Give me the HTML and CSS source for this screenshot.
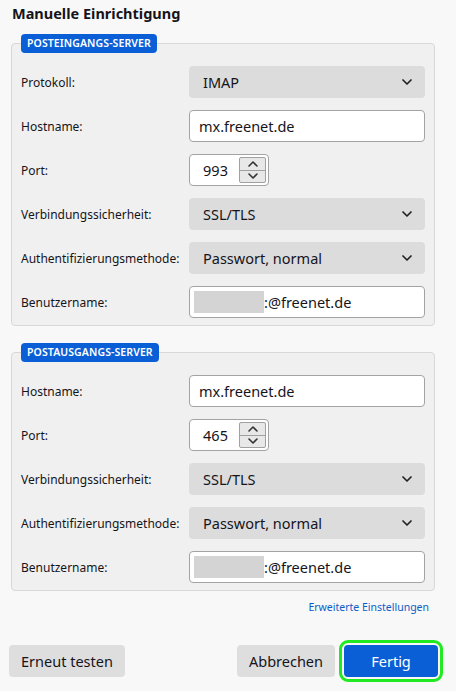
FILE: index.html
```html
<!DOCTYPE html>
<html lang="de">
<head>
<meta charset="utf-8">
<title>Manuelle Einrichtigung</title>
<link rel="stylesheet" href="styles.css">
</head>
<body>
<main class="page">
  <h1 class="title">Manuelle Einrichtigung</h1>

  <section class="group group-in">
    <span class="badge">POSTEINGANGS-SERVER</span>
    <div class="grid">
      <label class="label">Protokoll:</label>
      <div class="select"><span>IMAP</span><svg class="chev" viewBox="0 0 10 6"><path d="M1 1l4 4 4-4"/></svg></div>

      <label class="label">Hostname:</label>
      <div class="input">mx.freenet.de</div>

      <label class="label">Port:</label>
      <div class="number"><span class="num">993</span><span class="spin"><span class="spin-btn"><svg viewBox="0 0 10 6"><path d="M1 5l4-4 4 4"/></svg></span><span class="spin-btn"><svg viewBox="0 0 10 6"><path d="M1 1l4 4 4-4"/></svg></span></span></div>

      <label class="label">Verbindungssicherheit:</label>
      <div class="select"><span>SSL/TLS</span><svg class="chev" viewBox="0 0 10 6"><path d="M1 1l4 4 4-4"/></svg></div>

      <label class="label">Authentifizierungsmethode:</label>
      <div class="select"><span>Passwort, normal</span><svg class="chev" viewBox="0 0 10 6"><path d="M1 1l4 4 4-4"/></svg></div>

      <label class="label">Benutzername:</label>
      <div class="input user"><span class="redact"></span><span>:@freenet.de</span></div>
    </div>
  </section>

  <section class="group group-out">
    <span class="badge">POSTAUSGANGS-SERVER</span>
    <div class="grid">
      <label class="label">Hostname:</label>
      <div class="input">mx.freenet.de</div>

      <label class="label">Port:</label>
      <div class="number"><span class="num">465</span><span class="spin"><span class="spin-btn"><svg viewBox="0 0 10 6"><path d="M1 5l4-4 4 4"/></svg></span><span class="spin-btn"><svg viewBox="0 0 10 6"><path d="M1 1l4 4 4-4"/></svg></span></span></div>

      <label class="label">Verbindungssicherheit:</label>
      <div class="select"><span>SSL/TLS</span><svg class="chev" viewBox="0 0 10 6"><path d="M1 1l4 4 4-4"/></svg></div>

      <label class="label">Authentifizierungsmethode:</label>
      <div class="select"><span>Passwort, normal</span><svg class="chev" viewBox="0 0 10 6"><path d="M1 1l4 4 4-4"/></svg></div>

      <label class="label">Benutzername:</label>
      <div class="input user"><span class="redact"></span><span>:@freenet.de</span></div>
    </div>
  </section>

  <div class="advanced"><a class="link" href="#">Erweiterte Einstellungen</a></div>

  <footer class="actions">
    <button class="btn">Erneut testen</button>
    <div class="actions-right">
      <button class="btn">Abbrechen</button>
      <button class="btn btn-primary">Fertig</button>
    </div>
  </footer>
</main>
</body>
</html>
```

FILE: styles.css
```css
* { box-sizing: border-box; }

html, body {
  margin: 0;
  padding: 0;
  background: #f8f8f8;
}

body {
  font-family: "Noto Sans", "Open Sans", sans-serif;
  color: #15141a;
  width: 456px;
  height: 691px;
  overflow: hidden;
}

.page {
  padding: 3px 0 0 0;
}

.title {
  margin: 0 0 0 12px;
  font-size: 14.5px;
  font-weight: 700;
  line-height: 20px;
  height: 40px;
}

.group {
  position: relative;
  margin: 0 21px 0 11px;
  border: 1px solid #d8d8d8;
  border-radius: 4px;
  background: #f0f0f0;
  padding: 22px 9px 7px 9px;
}

.group-out {
  margin-top: 26px;
}

.badge {
  position: absolute;
  top: -10px;
  left: 9px;
  height: 19px;
  padding: 0 6px;
  border-radius: 4px;
  background: #0a5fd6;
  color: #fff;
  font-size: 10.5px;
  font-weight: 600;
  line-height: 19px;
  letter-spacing: 0.1px;
}

.grid {
  display: grid;
  grid-template-columns: 168px 236px;
  grid-auto-rows: 32px;
  row-gap: 12px;
  align-items: center;
}

.label {
  font-size: 12px;
}

.select {
  height: 32px;
  border-radius: 4px;
  background: #dcdcdc;
  display: flex;
  align-items: center;
  justify-content: space-between;
  padding: 0 13px 0 14px;
  font-size: 14.5px;
}

.chev {
  width: 10px;
  height: 6px;
  fill: none;
  stroke: #222;
  stroke-width: 1.7;
  stroke-linecap: round;
  stroke-linejoin: round;
}

.input {
  height: 32px;
  border: 1px solid #a3a3a3;
  border-radius: 4px;
  background: #fff;
  display: flex;
  align-items: center;
  padding: 0 9px;
  font-size: 14.5px;
}

.input.user {
  padding-left: 4px;
}

.redact {
  width: 70px;
  height: 22px;
  background: #d4d4d4;
}

.number {
  width: 80px;
  height: 32px;
  border: 1px solid #a3a3a3;
  border-radius: 4px;
  background: #fff;
  display: flex;
  align-items: center;
  padding: 0 1px 0 0;
  font-size: 14.5px;
}

.num {
  flex: 1;
  text-align: center;
  padding-left: 2px;
}

.spin {
  width: 27px;
  height: 26px;
  display: flex;
  flex-direction: column;
  border: 1px solid #a0a0a0;
  border-radius: 2px;
  background: #e8e8e8;
  margin-right: 1px;
}

.spin-btn {
  flex: 1;
  display: flex;
  align-items: center;
  justify-content: center;
}

.spin-btn + .spin-btn {
  border-top: 1px solid #a0a0a0;
}

.spin-btn svg {
  width: 10px;
  height: 6px;
  fill: none;
  stroke: #333;
  stroke-width: 1.6;
  stroke-linecap: round;
  stroke-linejoin: round;
}

.advanced {
  display: flex;
  justify-content: flex-end;
  padding: 9px 27px 0 0;
  height: 37px;
}

.link {
  color: #0b5cc9;
  font-size: 10.5px;
  text-decoration: none;
}

.actions {
  display: flex;
  justify-content: space-between;
  padding: 17px 18px 0 9px;
}

.actions-right {
  display: flex;
  gap: 9px;
}

.btn {
  height: 32px;
  border: none;
  border-radius: 4px;
  background: #dedede;
  color: #15141a;
  font-family: "Noto Sans", "Open Sans", sans-serif;
  font-size: 14.5px;
  padding: 0 12px;
}

.btn-primary {
  background: #0a5fd6;
  color: #fff;
  width: 94px;
  outline: 3px solid #22ea22;
  outline-offset: 2px;
}
```
